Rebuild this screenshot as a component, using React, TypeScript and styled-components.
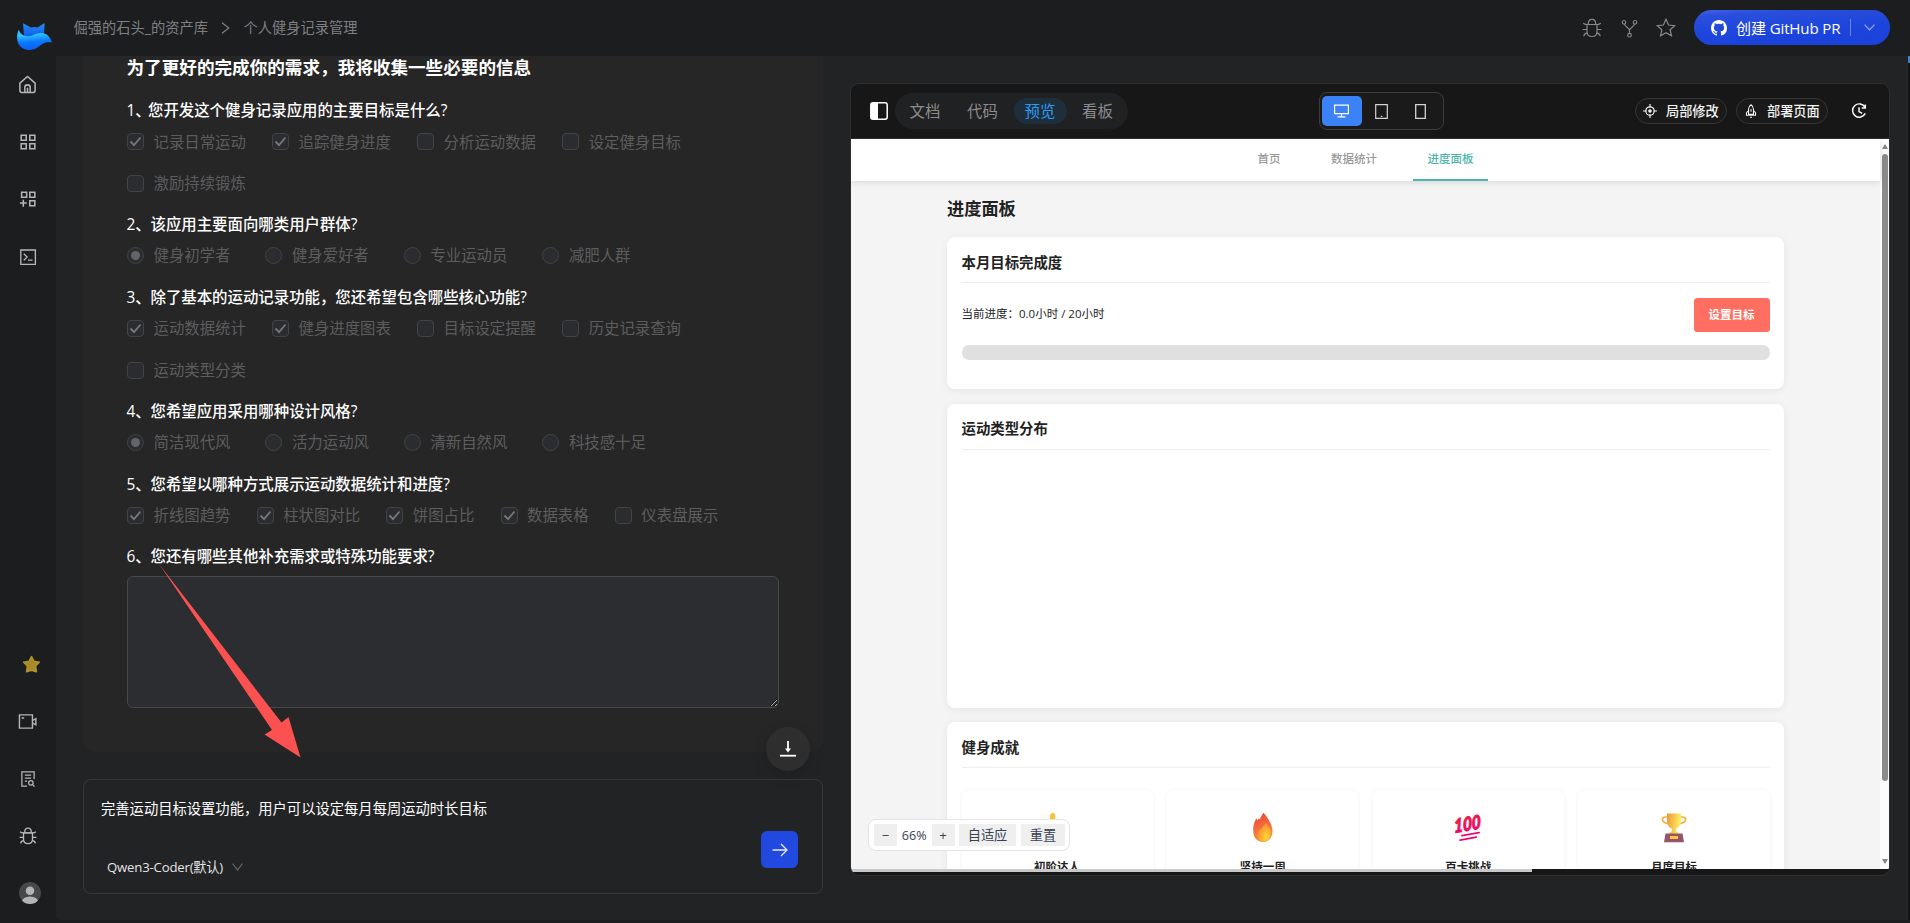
import React from "react";
import styled, { createGlobalStyle, css } from "styled-components";

const GlobalStyle = createGlobalStyle`
  *, *::before, *::after { box-sizing: border-box; }
  html, body { margin: 0; padding: 0; background: #151618; overflow: hidden; }
  body { font-family: "Open Sans", "Noto Sans CJK SC", sans-serif; color: #fff; }
  button, textarea { font-family: inherit; margin: 0; padding: 0; border: 0; }
  svg { display: block; flex: none; overflow: visible; }
`;

/* ---------- shell ---------- */

const Shell = styled.div`
  position: relative;
  width: 1910px;
  height: 923px;
  display: grid;
  grid-template: 56px 1fr 3px / 56px 1fr 2px;
  background: #1b1d1f;
  overflow: hidden;
`;

const Header = styled.header`
  grid-column: 1 / -1;
  display: flex;
  align-items: center;
  padding: 0 20px 0 17px;
`;

const LogoBox = styled.div`
  width: 56.5px;
  padding-top: 16px;
`;

const Crumbs = styled.nav`
  display: flex;
  align-items: center;
  flex: 1;
  font-size: 14.25px;
  line-height: 20px;
  color: #7f8082;
`;

const CrumbSep = styled.span`
  width: 35.5px;
  display: flex;
  justify-content: center;
`;

const HeaderIcons = styled.div`
  display: flex;
  align-items: center;
  gap: 17.5px;
  margin-right: 18px;
  color: #88898b;
`;

const PrButton = styled.button`
  width: 196px;
  height: 35px;
  margin-top: -1px;
  padding: 0 15px 0 17px;
  display: flex;
  align-items: center;
  border-radius: 18px;
  background: linear-gradient(176deg, #4563e6 0%, #2a4fdc 14%, #1d45dc 55%, #1a42dc 100%);
  color: #fff;
  font-size: 15.1px;
  white-space: nowrap;
`;

const PrLabel = styled.span`
  flex: 1;
  min-width: 0;
  margin-left: 9px;
  text-align: left;
  line-height: 20px;
  letter-spacing: -0.15px;
`;

const PrDivider = styled.i`
  width: 1px;
  height: 17px;
  margin-right: 13px;
  background: #6c86e8;
`;

const Sidebar = styled.aside`
  display: flex;
  flex-direction: column;
  align-items: flex-start;
  margin-bottom: -2px;
  color: #b5b6b7;
`;

const SideItem = styled.div<{ $h?: number; $shift?: number }>`
  width: 55px;
  height: ${(p) => p.$h ?? 57.4}px;
  padding-left: ${(p) => p.$shift ?? 0}px;
  display: flex;
  align-items: center;
  justify-content: center;
`;

const SideGap = styled.div`
  flex: 1;
`;

const Main = styled.main`
  display: flex;
  justify-content: space-between;
  padding-right: 18px;
  padding-left: 27px;
  border-bottom-left-radius: 5px;
  background: #222325;
  min-height: 0;
`;

const EdgeStrip = styled.div`
  background: linear-gradient(#3b7fd0 0 7px, #151618 7px);
`;

/* ---------- chat column ---------- */

const ChatColumn = styled.section`
  position: relative;
  width: 740px;
  display: flex;
  flex-direction: column;
  min-height: 0;
`;

const FormCard = styled.div`
  height: 696px;
  padding: 0 44px;
  border-radius: 0 0 12px 12px;
  background: #262626;
  overflow: hidden;
`;

const FormTitle = styled.h2`
  margin: 0 0 20px -0.5px;
  height: 25px;
  font-size: 17.6px;
  line-height: 23px;
  font-weight: 700;
  white-space: nowrap;
`;

const Question = styled.div<{ $radio?: boolean }>`
  margin-bottom: ${(p) => (p.$radio ? 11.3 : 10.7)}px;
`;

const QuestionTitle = styled.div`
  height: 20px;
  display: flex;
  font-size: 15.42px;
  line-height: 19px;
  font-weight: 500;
  white-space: nowrap;
`;

const QuestionNo = styled.span<{ $narrow?: boolean }>`
  width: ${(p) => (p.$narrow ? 21.5 : 24)}px;
  flex: none;
  margin-left: -0.5px;
`;

const Options = styled.div<{ $radio?: boolean }>`
  display: flex;
  flex-wrap: wrap;
  column-gap: ${(p) => (p.$radio ? 35 : 26.2)}px;
`;

const Option = styled.label`
  height: 41.6px;
  display: flex;
  align-items: center;
  gap: 9.5px;
  color: #5d5d5f;
  font-size: 15.4px;
  line-height: 20px;
  white-space: nowrap;
`;

const Mark = styled.span<{ $radio?: boolean }>`
  width: 17px;
  height: 17px;
  display: flex;
  align-items: center;
  justify-content: center;
  border: 1px solid #424346;
  border-radius: ${(p) => (p.$radio ? "50%" : "4px")};
  background: #2b2c30;
`;

const Dot = styled.i`
  width: 9px;
  height: 9px;
  border-radius: 50%;
  background: #636467;
`;

const OptionText = styled.span`
  padding-top: 1.5px;
`;

const Notes = styled.textarea`
  display: block;
  width: 652px;
  height: 132px;
  margin-top: 9px;
  border: 1px solid #47484b;
  border-radius: 6px;
  background: #2c2d30;
  color: #fff;
  resize: vertical;
  outline: none;
`;

const Composer = styled.div`
  height: 115px;
  margin-top: 27px;
  padding: 19px 24px 15px 17px;
  display: grid;
  grid-template: 1fr 22px / 1fr 37px;
  border: 1px solid #37383a;
  border-radius: 8px;
`;

const ComposerText = styled.div`
  font-size: 14.3px;
  line-height: 20px;
  white-space: nowrap;
`;

const ModelPicker = styled.div`
  grid-row: 2;
  grid-column: 1;
  padding-left: 6px;
  display: flex;
  align-items: center;
  gap: 9px;
  font-size: 13.2px;
  line-height: 20px;
  letter-spacing: -0.2px;
  color: #e4e4e4;
`;

const SendButton = styled.button`
  grid-column: 2;
  grid-row: 1 / 3;
  align-self: end;
  width: 37px;
  height: 37px;
  margin-bottom: 10px;
  display: flex;
  align-items: center;
  justify-content: center;
  border-radius: 6px;
  background: #2149df;
`;

const JumpButton = styled.button`
  position: absolute;
  right: 13px;
  top: 671px;
  width: 44px;
  height: 44px;
  display: flex;
  align-items: center;
  justify-content: center;
  border-radius: 50%;
  background: #2e2e2e;
  box-shadow: 0 6px 16px rgba(0, 0, 0, 0.12);
`;

/* ---------- preview panel ---------- */

const Panel = styled.section`
  width: 1040px;
  height: 793px;
  margin-top: 27px;
  display: flex;
  flex-direction: column;
  border: 1px solid #2d2e30;
  border-radius: 9px;
  background: #171717;
  overflow: hidden;
`;

const Toolbar = styled.div`
  height: 55px;
  flex: none;
  display: grid;
  grid-template-columns: 450px auto 1fr;
  align-items: center;
  padding: 0 22px 0 19px;
  border-bottom: 1px solid #2d2e30;
`;

const ToolLeft = styled.div`
  display: flex;
  align-items: center;
  gap: 7px;
  margin-left: -0.5px;
`;

const ToolRight = styled.div`
  display: flex;
  align-items: center;
  justify-content: flex-end;
  gap: 9px;
`;

const Tabs = styled.div`
  height: 36px;
  padding: 0 4px;
  display: flex;
  align-items: center;
  gap: 4.5px;
  border-radius: 18px;
  background: #202123;
`;

const Tab = styled.span<{ $active?: boolean }>`
  width: 53px;
  height: 26px;
  text-align: center;
  border-radius: 13px;
  font-size: 15.4px;
  line-height: 27px;
  color: #8c8c8c;
  ${(p) =>
    p.$active &&
    css`
      background: #1f2e3b;
      color: #2e9bf5;
    `}
`;

const Devices = styled.div`
  width: 125px;
  height: 38px;
  margin-left: -1px;
  padding: 0 2px;
  display: flex;
  align-items: center;
  border: 1px solid #3d3d3e;
  border-radius: 8px;
  background: #1a1a1a;
`;

const Device = styled.span<{ $active?: boolean }>`
  width: 39.5px;
  height: 30px;
  display: flex;
  align-items: center;
  justify-content: center;
  border-radius: 5px;
  color: #d2d3d8;
  background: ${(p) => (p.$active ? "#3b82f6" : "transparent")};
`;

const PillButton = styled.button`
  width: 92px;
  height: 26px;
  padding-left: 7px;
  display: flex;
  align-items: center;
  border: 1px solid #363637;
  border-radius: 13px;
  background: #1a1a1a;
  color: #f2f2f2;
  font-size: 13.2px;
  font-weight: 500;
  white-space: nowrap;
`;

const PillLabel = styled.span`
  margin-left: 9px;
  line-height: 20px;
`;

const HistoryBox = styled.span`
  margin-left: 14px;
`;

const Viewport = styled.div`
  position: relative;
  height: 730px;
  flex: none;
  display: flex;
  overflow: hidden;
  font-family: "Open Sans", "Noto Sans CJK SC", sans-serif;
  color: #222;
`;

const Site = styled.div`
  flex: 1;
  background: #f4f4f4;
`;

const SiteNav = styled.nav`
  position: relative;
  height: 42px;
  display: flex;
  justify-content: center;
  gap: 21.6px;
  background: #fff;
  box-shadow: 0 1px 7px rgba(0, 0, 0, 0.13);
`;

const NavItem = styled.a<{ $active?: boolean }>`
  height: 42px;
  padding: 0 14.5px;
  font-size: 11.5px;
  line-height: 40px;
  font-weight: 500;
  color: ${(p) => (p.$active ? "#4db6ac" : "#999")};
  border-bottom: 2px solid ${(p) => (p.$active ? "#4db6ac" : "transparent")};
`;

const SiteBody = styled.div`
  width: 837px;
  margin: 0 auto;
  padding-top: 15px;
`;

const SiteTitle = styled.h1`
  margin: 0;
  height: 41.4px;
  font-size: 17.2px;
  line-height: 26px;
  font-weight: 700;
`;

const Card = styled.section<{ $h: number }>`
  height: ${(p) => p.$h}px;
  margin-bottom: 14.2px;
  padding: 14.5px;
  border-radius: 8px;
  background: #fff;
  box-shadow: 0 1.5px 8px rgba(0, 0, 0, 0.06);
`;

const CardTitle = styled.h2`
  margin: 0;
  height: 31.5px;
  border-bottom: 1.4px solid #eee;
  font-size: 14.4px;
  line-height: 22.5px;
  font-weight: 700;
`;

const GoalRow = styled.div`
  margin-top: 14.2px;
  height: 34px;
  display: flex;
  align-items: center;
  justify-content: space-between;
  font-size: 11.5px;
`;

const GoalText = styled.span`
  padding-bottom: 2.5px;
`;

const GoalButton = styled.button`
  width: 76px;
  height: 34px;
  padding-bottom: 1px;
  border-radius: 3.6px;
  background: #ff6f61;
  color: #fff;
  font-size: 11.5px;
  font-weight: 700;
`;

const Track = styled.div`
  height: 14.5px;
  margin-top: 13.6px;
  border-radius: 7.2px;
  background: #e0e0e0;
`;

const Badges = styled.div`
  margin-top: 21.5px;
  display: grid;
  grid-template-columns: repeat(4, 1fr);
  gap: 14.4px;
`;

const Badge = styled.div`
  height: 130px;
  padding-top: 19px;
  display: flex;
  flex-direction: column;
  align-items: center;
  gap: 11.5px;
  border-radius: 8px;
  box-shadow: 0 1px 6px rgba(0, 0, 0, 0.05);
  font-size: 11.5px;
  line-height: 22px;
  font-weight: 700;
`;

const Scrollbar = styled.div`
  width: 9px;
  padding: 5px 0 4px;
  display: flex;
  flex-direction: column;
  align-items: center;
  background: #fcfcfc;
`;

const Thumb = styled.i`
  width: 6px;
  height: 627px;
  margin-top: 5px;
  border-radius: 3px;
  background: #8b8b8b;
`;

const ArrowTip = styled.i<{ $down?: boolean }>`
  margin-top: ${(p) => (p.$down ? "auto" : 0)};
  margin-bottom: ${(p) => (p.$down ? "1px" : 0)};
  border: 3px solid transparent;
  ${(p) => (p.$down ? "border-top: 5px solid #858585; border-bottom: 0;" : "border-bottom: 5px solid #858585; border-top: 0;")}
`;

const HScroll = styled.div`
  width: 681px;
  height: 3px;
  flex: none;
  background: #c9c9c9;
`;

const ZoomBar = styled.div`
  position: absolute;
  left: 17px;
  top: 680px;
  width: 202px;
  height: 32px;
  padding: 0 4px 0 5px;
  display: flex;
  align-items: center;
  border: 1px solid #e4e4e7;
  border-radius: 8px;
  background: #fff;
  color: #374151;
  font-size: 13px;
`;

const ZoomButton = styled.button<{ $w: number; $ml?: number }>`
  width: ${(p) => p.$w}px;
  height: 22px;
  flex: none;
  margin-left: ${(p) => p.$ml ?? 0}px;
  background: #efefef;
  color: #374151;
  font-size: 13.2px;
  line-height: 20px;
`;

const ZoomValue = styled.span`
  width: 35px;
  text-align: center;
  font-size: 12.6px;
`;

const Pointer = styled.svg`
  position: absolute;
  left: 157px;
  top: 562px;
  pointer-events: none;
`;

/* ---------- icons ---------- */

type IconProps = { size: number; children: React.ReactNode; sw?: number };
const Icon = ({ size, children, sw = 1.2 }: IconProps) => (
  <svg width={size} height={size} viewBox="0 0 20 20" fill="none" stroke="currentColor" strokeWidth={sw}>
    {children}
  </svg>
);

const Bug = ({ size, sw }: { size: number; sw?: number }) => (
  <Icon size={size} sw={sw}>
    <path d="M5 6.5h10v7.200c0 2.800-2 4.800-5 4.800s-5-2-5-4.800z" />
    <path d="M1.200 5.200c1 .9 2 1.300 3.600 1.300h10.400c1.600 0 2.600-.4 3.600-1.300" />
    <path d="M6.300 6C6.300 3.300 7.800 1.300 10 1.300S13.700 3.300 13.700 6M.6 11.500H5M15 11.500h4.400M1.800 18.200c.2-2 1.300-2.900 3.500-3.100M18.200 18.200c-.2-2-1.300-2.900-3.500-3.100" />
  </Icon>
);

const Chevron = ({ w, h, color, sw = 1.2 }: { w: number; h: number; color: string; sw?: number }) => (
  <svg width={w} height={h} viewBox={`0 0 ${w} ${h}`} fill="none" stroke={color} strokeWidth={sw}>
    <path d={`M.6 .6 ${w / 2} ${h - 1} ${w - 0.6} .6`} />
  </svg>
);

const Logo = () => (
  <svg width="35" height="29" viewBox="0 0 35 29">
    <defs>
      <linearGradient id="ears" x1="0" y1="0" x2="0" y2="1">
        <stop offset="0" stopColor="#2a8cf5" />
        <stop offset="1" stopColor="#0657e6" />
      </linearGradient>
      <linearGradient id="tail" x1="0" y1="0" x2="0.15" y2="1">
        <stop offset="0" stopColor="#35a5ff" />
        <stop offset="0.3" stopColor="#33c3fb" />
        <stop offset="0.65" stopColor="#0a78ff" />
        <stop offset="1" stopColor="#0b62f2" />
      </linearGradient>
    </defs>
    <path d="M6 1.200 14 5.600c2-.7 4.500-.7 6.500 0l7.200-4.500-.6 10.500L17 16 7 14z" fill="url(#ears)" />
    <path d="M1.800 7.500C-.8 13-.6 20 3.200 24.300c4.600 5 12.800 4.700 18.300.4 4.200-3.300 7.500-5.900 13.300-4.200-1.200-5.300-5-9.500-10.700-9.500-5.600 0-8 3.200-13.100 3.200C6.500 14.200 3 12 1.800 7.500z" fill="url(#tail)" />
  </svg>
);

const StarBadge = () => (
  <svg width="19" height="19" viewBox="0 0 20 20">
    <path d="M10 1.800 12.500 6.700l5.700.9-4 4 .9 5.900-5.100-1.600-5.100 1.600.9-5.900-4-4 5.700-.9z" fill="#a88a2b" stroke="#b0912c" strokeWidth="1.800" strokeLinejoin="round" />
  </svg>
);

const Avatar = () => (
  <svg width="22" height="22" viewBox="0 0 22 22">
    <clipPath id="face"><circle cx="11" cy="11" r="11" /></clipPath>
    <circle cx="11" cy="11" r="11" fill="#48484a" />
    <g clipPath="url(#face)" fill="#b4b4b5">
      <circle cx="11" cy="8.700" r="4.300" />
      <ellipse cx="11" cy="20" rx="8.200" ry="5.600" />
    </g>
  </svg>
);

const GitHubMark = () => (
  <svg width="16" height="16" viewBox="0 0 16 16" fill="#fff">
    <path d="M8 0C3.580 0 0 3.580 0 8c0 3.540 2.290 6.530 5.470 7.590.4.07.55-.17.55-.38 0-.19-.01-.82-.01-1.490-2.010.37-2.530-.49-2.690-.94-.09-.23-.48-.94-.82-1.130-.28-.15-.68-.52-.01-.53.63-.01 1.080.58 1.230.82.72 1.210 1.870.87 2.330.66.07-.52.28-.87.51-1.070-1.780-.2-3.640-.89-3.640-3.950 0-.87.31-1.590.82-2.150-.08-.2-.36-1.020.08-2.120 0 0 .67-.21 2.200.82a7.600 7.600 0 0 1 4 0c1.530-1.040 2.200-.82 2.200-.82.44 1.100.16 1.920.08 2.120.51.56.82 1.270.82 2.150 0 3.070-1.870 3.750-3.650 3.950.29.25.54.73.54 1.480 0 1.070-.01 1.930-.01 2.200 0 .21.15.46.55.38A8 8 0 0 0 16 8c0-4.420-3.580-8-8-8z" />
  </svg>
);

const Flame = () => (
  <svg width="30" height="36" viewBox="0 0 30 36">
    <defs>
      <linearGradient id="fo" x1="0" y1="0" x2="0.3" y2="1">
        <stop offset="0" stopColor="#e8413c" />
        <stop offset="0.6" stopColor="#f4703c" />
        <stop offset="1" stopColor="#f59a35" />
      </linearGradient>
      <radialGradient id="fi" cx="0.65" cy="0.75" r="0.7">
        <stop offset="0" stopColor="#ffd92e" />
        <stop offset="1" stopColor="#fa8a35" />
      </radialGradient>
    </defs>
    <path d="M15.500 3.800c3.500 4 9 11 9 18.500 0 6.500-4 10.700-9.300 10.700-5.700 0-10-4-10-11 0-5 .8-9.500 3.300-12.700l.9 2.200c.4-1 1-1.600 1.700-2.200l.7 1.500C12.500 8 14 5.800 15.500 3.800z" fill="url(#fo)" />
    <path d="M18 13.500c3.500 4.500 5.200 8 4.700 12-.6 4.500-3 7-7 7s-6.100-3-5.900-7c.3-4.500 5.300-7 8.200-12z" fill="url(#fi)" />
  </svg>
);

const Trophy = () => (
  <svg width="30" height="36" viewBox="0 0 30 36">
    <defs>
      <linearGradient id="cup" x1="0" y1="0" x2="1" y2="0.2">
        <stop offset="0" stopColor="#ee9340" />
        <stop offset="1" stopColor="#fff25c" />
      </linearGradient>
    </defs>
    <path d="M8.500 8H6.700c-5 0-4.500 6 3.300 6.800M21.500 8h1.800c5 0 4.500 6-3.300 6.800" fill="none" stroke="#f5b042" strokeWidth="1.700" />
    <path d="M8 4.500h14v7.500c0 4-2.500 7-5.200 7.800l.5 2.700 2.700 1.500v1H10v-1l2.700-1.500.5-2.700C10.500 19 8 16 8 12z" fill="url(#cup)" />
    <path d="M6.500 24.500h17l1.500 8.800H5z" fill="#95546a" />
    <rect x="11" y="27" width="8" height="3" fill="#ffc547" />
  </svg>
);

const Hundred = () => (
  <svg width="32" height="36" viewBox="0 0 32 36">
    <defs>
      <linearGradient id="hd" x1="0" y1="0" x2="0" y2="1">
        <stop offset="0" stopColor="#dd2434" />
        <stop offset="1" stopColor="#f4007c" />
      </linearGradient>
    </defs>
    <g transform="translate(2.500 -1) rotate(-10 16 18) skewX(-8)">
      <text x="15.500" y="22.200" textAnchor="middle" fontFamily="Lato, sans-serif" fontWeight="900" fontStyle="italic" fontSize="19" textLength="27" lengthAdjust="spacingAndGlyphs" fill="url(#hd)" stroke="url(#hd)" strokeWidth="1">100</text>
      <path d="M9.500 26h17.500M7.500 30h16.500" stroke="#ef0472" strokeWidth="1.700" strokeLinecap="round" />
    </g>
  </svg>
);

const Muscle = () => (
  <svg width="30" height="36" viewBox="0 0 30 36">
    <path d="M8.500 4.800c1-1 3.500-1 4.200.2l.5 2.500-.5 2c2.500.2 6 1 9.500 4 3 4 2 12-1 16-6 3-12 2-15-1 0-6 1-16 2.300-23.700z" fill="#fdc030" />
  </svg>
);

/* ---------- data ---------- */

type Choice = [string, boolean?];
const questions: { title: string; radio?: boolean; options: Choice[] }[] = [
  { title: "您开发这个健身记录应用的主要目标是什么?", options: [["记录日常运动", true], ["追踪健身进度", true], ["分析运动数据"], ["设定健身目标"], ["激励持续锻炼"]] },
  { title: "该应用主要面向哪类用户群体?", radio: true, options: [["健身初学者", true], ["健身爱好者"], ["专业运动员"], ["减肥人群"]] },
  { title: "除了基本的运动记录功能，您还希望包含哪些核心功能?", options: [["运动数据统计", true], ["健身进度图表", true], ["目标设定提醒"], ["历史记录查询"], ["运动类型分类"]] },
  { title: "您希望应用采用哪种设计风格?", radio: true, options: [["简洁现代风", true], ["活力运动风"], ["清新自然风"], ["科技感十足"]] },
  { title: "您希望以哪种方式展示运动数据统计和进度?", options: [["折线图趋势", true], ["柱状图对比", true], ["饼图占比", true], ["数据表格", true], ["仪表盘展示"]] },
];

const badges = [
  { name: "初阶达人", art: <Muscle /> },
  { name: "坚持一周", art: <Flame /> },
  { name: "百卡挑战", art: <Hundred /> },
  { name: "月度目标", art: <Trophy /> },
];

/* ---------- page ---------- */

export default function App() {
  return (
    <>
      <GlobalStyle />
      <Shell>
        <Header>
          <LogoBox><Logo /></LogoBox>
          <Crumbs>
            <span>倔强的石头_的资产库</span>
            <CrumbSep>
              <svg width="9" height="12" viewBox="0 0 9 12" fill="none" stroke="#7f8082" strokeWidth="1.200"><path d="M1 .8 7.800 6 1 11.200" /></svg>
            </CrumbSep>
            <span>个人健身记录管理</span>
          </Crumbs>
          <HeaderIcons>
            <Bug size={20} />
            <Icon size={19}>
              <circle cx="4.200" cy="3.500" r="1.900" />
              <circle cx="15.800" cy="3.500" r="1.900" />
              <circle cx="10" cy="17" r="1.900" />
              <path d="M4.700 5.400C5.200 8 10 9.500 10 12v3M15.300 5.400C14.800 8 10 9.500 10 12" />
            </Icon>
            <Icon size={20}>
              <path d="M10 1.300 12.600 7l6.100.6-4.600 4.100 1.400 6.100L10 14.700l-5.500 3.100 1.400-6.100L1.300 7.600 7.400 7z" />
            </Icon>
          </HeaderIcons>
          <PrButton>
            <GitHubMark />
            <PrLabel>创建 GitHub PR</PrLabel>
            <PrDivider />
            <Chevron w={11} h={7} color="#8ea3ee" sw={1.3} />
          </PrButton>
        </Header>

        <Sidebar>
          <SideItem>
            <Icon size={19} sw={1.6}>
              <path d="M2 8.500 10 1.500l8 7v7.800c0 1.200-.8 2-2 2H4c-1.200 0-2-.8-2-2zM7.200 18v-5c0-1.500 1.200-2.600 2.800-2.600s2.800 1.100 2.800 2.600v5M10 13.500V18" />
            </Icon>
          </SideItem>
          <SideItem>
            <Icon size={18} sw={1.7}>
              <path d="M2.400 2.400h5.600v5.600H2.400zM12 2.400h5.600v5.600H12zM2.400 12h5.600v5.600H2.400zM12 12h5.600v5.600H12z" />
            </Icon>
          </SideItem>
          <SideItem>
            <Icon size={18} sw={1.7}>
              <path d="M2.900 2.400h5.600v5.600H2.900zM12 2.400h5.600v5.600H12zM12 12h5.600v5.600H12zM1 14.400h7.600M4.800 10.800v7.800" />
            </Icon>
          </SideItem>
          <SideItem>
            <Icon size={18} sw={1.5}>
              <path d="M2 2.200h16.200v16H2zM5.300 6.500 9 10l-3.700 3.500M10 13.500h5" />
            </Icon>
          </SideItem>
          <SideGap />
          <SideItem $shift={7}><StarBadge /></SideItem>
          <SideItem>
            <Icon size={19} sw={1.5}>
              <path d="M1.500 3h13.700v14H1.500zM3.800 6.300h2.700M15.200 9l3.600-2v6.500l-3.600-2" />
            </Icon>
          </SideItem>
          <SideItem>
            <Icon size={18} sw={1.4}>
              <path d="M9 18H3.200V2h13.600v8M6.500 5.700h7M6.500 9h7M6.500 12.300H9" />
              <circle cx="13.200" cy="14.300" r="2.500" />
              <path d="m15 16.200 2.300 2.300" />
            </Icon>
          </SideItem>
          <SideItem $h={56}><Bug size={18} sw={1.5} /></SideItem>
          <SideItem $h={58} $shift={5}><Avatar /></SideItem>
        </Sidebar>

        <Main>
          <ChatColumn>
            <FormCard>
              <FormTitle>为了更好的完成你的需求，我将收集一些必要的信息</FormTitle>
              {questions.map((q, i) => (
                <Question key={q.title} $radio={q.radio}>
                  <QuestionTitle>
                    <QuestionNo $narrow={i === 0}>{i + 1}、</QuestionNo>
                    {q.title}
                  </QuestionTitle>
                  <Options $radio={q.radio}>
                    {q.options.map(([text, on]) => (
                      <Option key={text}>
                        <Mark $radio={q.radio}>
                          {on && (q.radio ? <Dot /> : (
                            <svg width="13" height="11" viewBox="0 0 13 11" fill="none" stroke="#77787a" strokeWidth="1.800"><path d="m1.500 5.500 3.500 3.600 6.500-7.600" /></svg>
                          ))}
                        </Mark>
                        <OptionText>{text}</OptionText>
                      </Option>
                    ))}
                  </Options>
                </Question>
              ))}
              <QuestionTitle><QuestionNo>6、</QuestionNo>您还有哪些其他补充需求或特殊功能要求?</QuestionTitle>
              <Notes />
            </FormCard>
            <Composer>
              <ComposerText>完善运动目标设置功能，用户可以设定每月每周运动时长目标</ComposerText>
              <ModelPicker>
                Qwen3-Coder(默认)
                <Chevron w={11} h={8} color="#65666a" />
              </ModelPicker>
              <SendButton>
                <svg width="16" height="14" viewBox="0 0 16 14" fill="none" stroke="#e6eaff" strokeWidth="1.300"><path d="M.5 7h14M9 1l6 6-6 6" /></svg>
              </SendButton>
            </Composer>
            <JumpButton>
              <svg width="16" height="16" viewBox="0 0 16 16" fill="none" stroke="#fff" strokeWidth="1.800"><path d="M8 0v9" /><path d="M5 7.500 8 11.500l3-4z" fill="#fff" stroke="none" /><path d="M0 14.700h16" /></svg>
            </JumpButton>
          </ChatColumn>

          <Panel>
            <Toolbar>
              <ToolLeft>
                <svg width="18" height="18" viewBox="0 0 18 18"><rect x=".8" y=".8" width="16.400" height="16.400" rx="2.200" fill="none" stroke="#fff" strokeWidth="1.500" /><rect x="1" y="1" width="7" height="16" fill="#fff" /></svg>
                <Tabs>
                  <Tab>文档</Tab>
                  <Tab>代码</Tab>
                  <Tab $active>预览</Tab>
                  <Tab>看板</Tab>
                </Tabs>
              </ToolLeft>
              <Devices>
                <Device $active>
                  <svg width="15" height="14" viewBox="0 0 15 14" fill="none" stroke="#fff" strokeWidth="1.200"><path d="M.6 1.100h13.800v8.500H.6zM7.500 9.600v3M3.500 12.900h8" /></svg>
                </Device>
                <Device>
                  <svg width="13" height="15" viewBox="0 0 13 15" fill="none" stroke="currentColor" strokeWidth="1.200"><path d="M.7 .7h11.600v13.600H.7zM5.800 12.300h1.500" /></svg>
                </Device>
                <Device>
                  <svg width="11" height="15" viewBox="0 0 11 15" fill="none" stroke="currentColor" strokeWidth="1.300"><path d="M.7 .7h9.600v13.600H.7z" /></svg>
                </Device>
              </Devices>
              <ToolRight>
                <PillButton>
                  <Icon size={14} sw={1.7}>
                    <circle cx="10" cy="10" r="6" />
                    <circle cx="10" cy="10" r="1.700" fill="currentColor" />
                    <path d="M10 0v5M10 15v5M0 10h5M15 10h5" />
                  </Icon>
                  <PillLabel>局部修改</PillLabel>
                </PillButton>
                <PillButton>
                  <Icon size={14} sw={1.5}>
                    <path d="M6.500 14.500V7.500c0-3 1.500-5.300 3.500-6.500 2 1.200 3.500 3.500 3.500 6.500v7zM6.500 9.500 3.500 12.500V16h13v-3.500l-3-3M10 7v4M8.500 19h3" />
                  </Icon>
                  <PillLabel>部署页面</PillLabel>
                </PillButton>
                <HistoryBox>
                  <Icon size={16} sw={1.8}>
                    <path d="M17.600 5.500A8.300 8.300 0 1 0 17.800 13M17.900 2v4.200h-4.500M10 5.200v5.500l4 2.200" />
                  </Icon>
                </HistoryBox>
              </ToolRight>
            </Toolbar>

            <Viewport>
              <Site>
                <SiteNav>
                  <NavItem>首页</NavItem>
                  <NavItem>数据统计</NavItem>
                  <NavItem $active>进度面板</NavItem>
                </SiteNav>
                <SiteBody>
                  <SiteTitle>进度面板</SiteTitle>
                  <Card $h={152}>
                    <CardTitle>本月目标完成度</CardTitle>
                    <GoalRow>
                      <GoalText>当前进度：0.0小时 / 20小时</GoalText>
                      <GoalButton>设置目标</GoalButton>
                    </GoalRow>
                    <Track />
                  </Card>
                  <Card $h={304.6}>
                    <CardTitle>运动类型分布</CardTitle>
                  </Card>
                  <Card $h={260}>
                    <CardTitle>健身成就</CardTitle>
                    <Badges>
                      {badges.map((b) => (
                        <Badge key={b.name}>
                          {b.art}
                          {b.name}
                        </Badge>
                      ))}
                    </Badges>
                  </Card>
                </SiteBody>
              </Site>
              <Scrollbar>
                <ArrowTip />
                <Thumb />
                <ArrowTip $down />
              </Scrollbar>
              <ZoomBar>
                <ZoomButton $w={23}>−</ZoomButton>
                <ZoomValue>66%</ZoomValue>
                <ZoomButton $w={23}>+</ZoomButton>
                <ZoomButton $w={57} $ml={4.5}>自适应</ZoomButton>
                <ZoomButton $w={44} $ml={5}>重置</ZoomButton>
              </ZoomBar>
            </Viewport>
            <HScroll />
          </Panel>
        </Main>
        <EdgeStrip />

        <Pointer width="148" height="198" viewBox="158 562 148 198">
          <path d="M160 564 282.500 722.500 289.500 717 301.500 757.500 265.500 734.500 273 730z" fill="#fb5151" />
        </Pointer>
      </Shell>
    </>
  );
}
